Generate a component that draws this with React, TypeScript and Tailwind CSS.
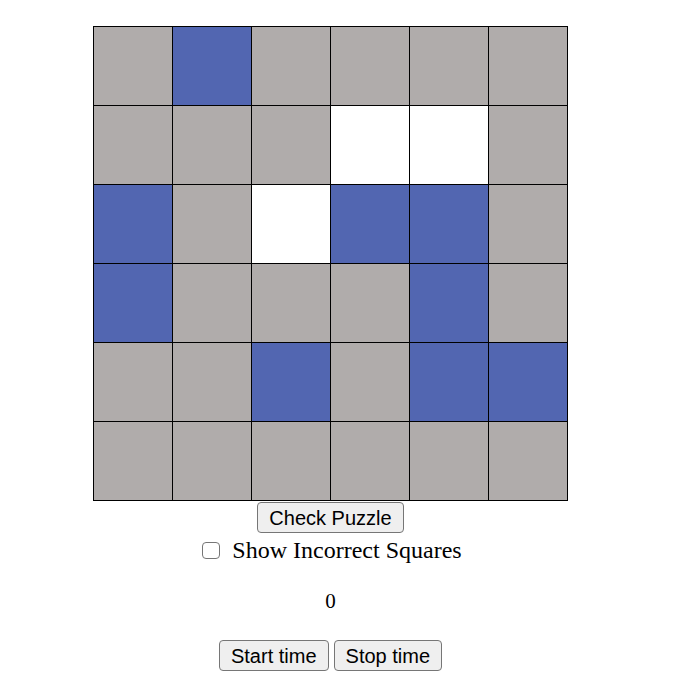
import { useState } from "react";

const G = "bg-[#b0acab]";
const B = "bg-[#5266b1]";
const W = "bg-white";

const board: string[][] = [
  [G, B, G, G, G, G],
  [G, G, G, W, W, G],
  [B, G, W, B, B, G],
  [B, G, G, G, B, G],
  [G, G, B, G, B, B],
  [G, G, G, G, G, G],
];

const btn =
  "h-[31px] px-[11px] bg-[#efefef] border border-[#767676] rounded-[4px] text-[20px] leading-none text-black font-['Liberation_Sans',Arial,sans-serif]";

export default function App() {
  const [showWrong, setShowWrong] = useState(false);
  const [time] = useState(0);

  return (
    <div className="w-[661px] flex flex-col items-center pt-[26px] font-['Liberation_Serif','Times_New_Roman',serif] text-[24px] text-black">
      <div className="grid grid-cols-[repeat(6,79px)] border-l border-t border-black">
        {board.flat().map((c, i) => (
          <div key={i} className={`h-[79px] border-r border-b border-black ${c}`} />
        ))}
      </div>
      <button className={`${btn} mt-[1px]`}>Check Puzzle</button>
      <label className="flex items-center h-[30px] mt-[2px] leading-none">
        <input
          type="checkbox"
          checked={showWrong}
          onChange={(e) => setShowWrong(e.target.checked)}
          className="w-[18px] h-[17px] ml-[3px] mr-[12px] appearance-none border border-[#767676] rounded-[4px] bg-white"
        />
        Show Incorrect Squares
      </label>
      <p className="mt-[24px] leading-[24px] text-[21px]">{time}</p>
      <div className="flex gap-[5px] mt-[27px]">
        <button className={btn}>Start time</button>
        <button className={btn}>Stop time</button>
      </div>
    </div>
  );
}
